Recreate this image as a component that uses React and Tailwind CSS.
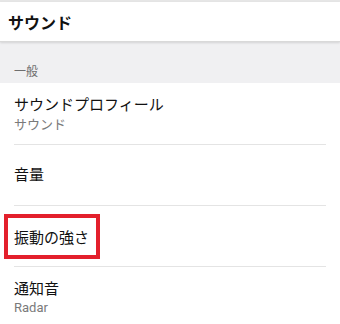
export default function App() {
  const font = { fontFamily: '"Noto Sans CJK JP", "Noto Sans", sans-serif' };
  return (
    <div className="w-[340px] h-[324px] overflow-hidden bg-white" style={font}>
      <div className="h-[2px] bg-[#e6e6e6]" />
      <div className="h-[40px] flex items-center px-[8px] border-b border-[#d9d9d9] shadow-[0_1px_2px_rgba(0,0,0,0.12)] relative">
        <span className="text-[16px] font-bold text-[#111]">サウンド</span>
      </div>
      <div className="h-[41px] bg-[#f0f0f2] flex items-end pb-[3px] px-[14px]">
        <span className="text-[12px] text-[#6e6e6e]">一般</span>
      </div>
      <div className="px-[14px]">
        <div className="h-[62px] flex flex-col justify-center border-b border-[#e4e4e4] w-[312px]">
          <span className="text-[15px] leading-[20px] text-[#111]">サウンドプロフィール</span>
          <span className="text-[13px] leading-[20px] text-[#7a7a7a]">サウンド</span>
        </div>
        <div className="h-[61px] flex items-center border-b border-[#e4e4e4] w-[312px] pb-[1px]">
          <span className="text-[15px] text-[#111]">音量</span>
        </div>
        <div className="h-[61px] flex items-center border-b border-[#e4e4e4] w-[312px] relative pt-[3px]">
          <span className="text-[15px] text-[#111]">振動の強さ</span>
          <div className="absolute left-[-10px] top-[8px] w-[96px] h-[45px] border-[4px] border-[#e3202c]" />
        </div>
        <div className="h-[62px] flex flex-col justify-center">
          <span className="text-[15px] leading-[20px] text-[#111]">通知音</span>
          <span className="text-[13px] leading-[20px] text-[#7a7a7a]" style={{ fontFamily: 'Roboto, "Noto Sans", sans-serif' }}>Radar</span>
        </div>
      </div>
    </div>
  );
}
